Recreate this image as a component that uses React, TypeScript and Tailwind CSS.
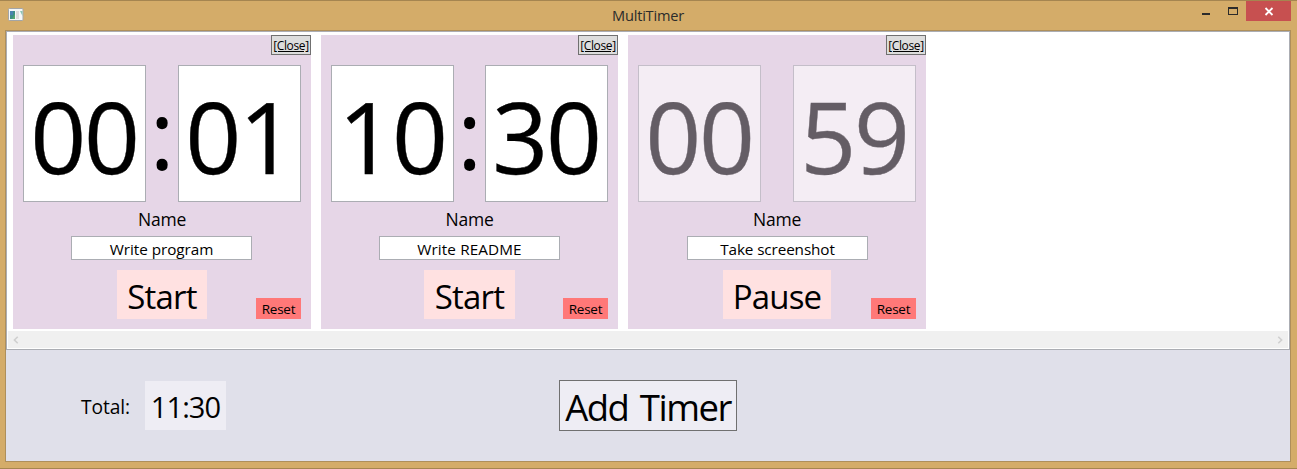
import React from "react";

type Timer = {
  minutes: string;
  seconds: string;
  name: string;
  running: boolean;
  card: string;
  field: string;
  action: string;
};

const timers: Timer[] = [
  { minutes: "00", seconds: "01", name: "Write program", running: false, card: "w-[298px]", field: "ml-[58px] tracking-[-0.05px]", action: "ml-[104px] w-[90px]" },
  { minutes: "10", seconds: "30", name: "Write README", running: false, card: "w-[297px]", field: "ml-[58px] tracking-[0.1px]", action: "ml-[103px] w-[91px]" },
  { minutes: "00", seconds: "59", name: "Take screenshot", running: true, card: "w-[298px]", field: "ml-[59px] tracking-[-0.12px]", action: "ml-[95px] w-[108px]" },
];

function Digits({ value, faded }: { value: string; faded: boolean }) {
  return (
    <div
      className={
        "flex h-[137px] w-[123px] items-center justify-center border border-[#abadb3] bg-white pt-[5px] text-[98px] leading-none tracking-[-2.2px] " +
        (faded ? "opacity-[0.56]" : "")
      }
    >
      <span className="pr-px [-webkit-text-stroke:0.4px_currentColor]">{value}</span>
    </div>
  );
}

function TimerCard({ timer }: { timer: Timer }) {
  return (
    <section className={"flex h-[294px] shrink-0 flex-col bg-[#e6d6e7] " + timer.card}>
      <button className="flex h-5 w-10 items-center justify-center self-end border border-[#707070] bg-[#dddddd] pt-[2px] text-[12px] leading-none tracking-[-0.35px] underline underline-offset-1">
        [Close]
      </button>
      <div className="mt-2.5 flex justify-between px-2.5">
        <Digits value={timer.minutes} faded={timer.running} />
        {!timer.running && (
          <span className="flex w-0 items-center justify-center pb-px text-[96px] leading-none">:</span>
        )}
        <Digits value={timer.seconds} faded={timer.running} />
      </div>
      <div className="flex h-[34px] items-center justify-center pt-[2px] text-[17.5px] leading-none tracking-[-0.25px]">Name</div>
      <div className={"flex h-6 w-[181px] items-center justify-center border border-[#abadb3] bg-white pt-[4px] text-[15.3px] leading-none " + timer.field}>
        {timer.name}
      </div>
      <div className="mt-2.5 flex items-end justify-between pr-2.5">
        <button className={"flex h-[49px] items-center justify-center bg-[#ffe1e1] pt-[3px] text-[33px] leading-none tracking-[-0.8px] " + timer.action}>
          {timer.running ? "Pause" : "Start"}
        </button>
        <button className="flex h-[21px] w-[45px] items-center justify-center bg-[#ff7878] pt-[3px] text-[13.5px] leading-none tracking-[-0.2px]">
          Reset
        </button>
      </div>
    </section>
  );
}

function TitleBar() {
  return (
    <header className="grid h-[29px] grid-cols-[1fr_auto_1fr] text-[#2b2b2b]">
      <svg className="ml-[8px] mt-[7px]" width="17" height="14" viewBox="0 0 17 14">
        <rect x="0.5" y="0.5" width="14.5" height="12" rx="1" fill="#f5f7f8" stroke="#a3a5a6" />
        <rect x="2" y="3" width="5" height="8" fill="#3f8f86" />
        <path d="M2 3h3v4H2z" fill="#4a83b0" />
        <path d="M4 11l3-5v5z" fill="#56a86d" />
        <rect x="8" y="3" width="3" height="8" fill="#dcdcdc" />
        <path d="M12 3h2.5v5z" fill="#8bc4b4" />
      </svg>
      <h1 className="flex items-center pr-px text-[14.6px] leading-none tracking-[-0.2px]">MultiTimer</h1>
      <div className="flex items-start justify-end pr-[6px]">
        <svg width="44" height="20" viewBox="0 0 44 20" shapeRendering="crispEdges">
          <rect x="0" y="12" width="8" height="2" fill="#2b2b2b" />
          <path fillRule="evenodd" d="M26 6h10v8H26zM27 8h8v5h-8z" fill="#2b2b2b" />
        </svg>
        <div className="flex h-5 w-[45px] justify-center bg-[#c75050]">
          <svg width="45" height="20" viewBox="0 0 45 20">
            <path d="M19.5 7l7 7M26.5 7l-7 7" stroke="#fff" strokeWidth="1.8" />
          </svg>
        </div>
      </div>
    </header>
  );
}

export default function App() {
  return (
    <div className="flex h-[469px] w-[1297px] flex-col overflow-hidden border-y border-[#a58550] bg-[#d4ac69] font-['Open_Sans','Noto_Sans',sans-serif] text-black">
      <TitleBar />
      <main className="mx-[5px] flex h-[432px] w-[1286px] flex-col border border-[#ae8f5b] bg-[#e0e0ea]">
        <div className="flex h-[319px] flex-col border border-[#abadb3] bg-white p-px pt-[3px]">
          <div className="flex gap-2.5 pl-[5px]">
            {timers.map((t) => (
              <TimerCard key={t.name} timer={t} />
            ))}
          </div>
          <div className="mt-0.5 flex h-[17px] items-center justify-between bg-[#f0f0f0] px-[5px]">
            <svg width="6" height="8" viewBox="0 0 6 8" fill="none" stroke="#cfcfcf" strokeWidth="1.6">
              <path d="M4.7 0.7L1.4 4l3.3 3.3" />
            </svg>
            <svg width="6" height="8" viewBox="0 0 6 8" fill="none" stroke="#cfcfcf" strokeWidth="1.6">
              <path d="M1.3 0.7L4.6 4 1.3 7.3" />
            </svg>
          </div>
        </div>
        <footer className="flex h-[111px] items-center pl-[75px]">
          <span className="w-[64px] pt-[3px] text-[19.2px] leading-none tracking-[-0.1px]">Total:</span>
          <div className="flex h-[49px] w-[81px] items-center justify-center bg-[#eeedf4] pt-[2px] text-[29px] leading-none tracking-[-0.9px]">
            11:30
          </div>
          <button className="ml-[333px] flex h-[51px] w-[178px] items-center justify-center border border-[#707070] bg-[#eeedf4] pt-[3px] text-[36.5px] leading-none tracking-[-1.5px] [word-spacing:3.5px]">
            Add Timer
          </button>
        </footer>
      </main>
    </div>
  );
}
